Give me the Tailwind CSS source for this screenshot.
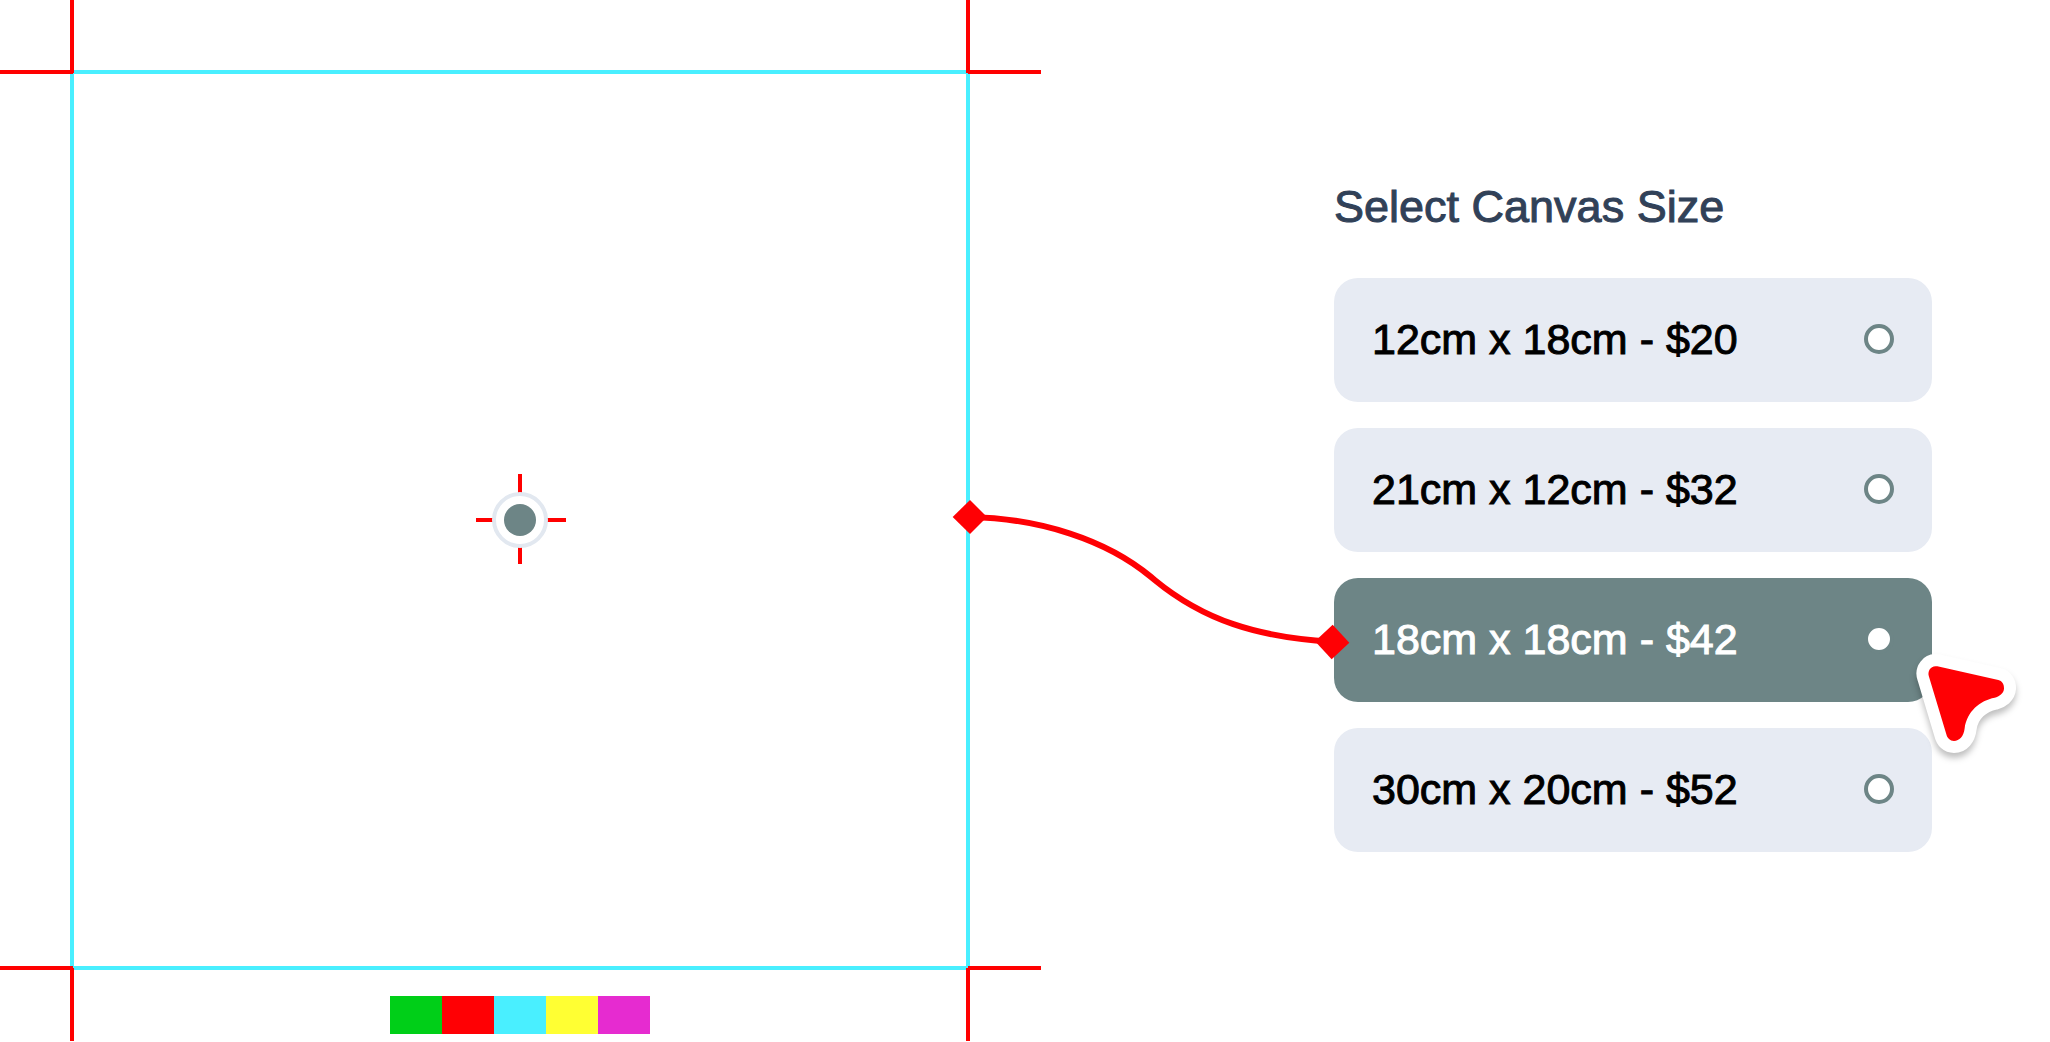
<!DOCTYPE html>
<html lang="en">
<head>
<meta charset="utf-8">
<meta name="viewport" content="width=device-width, initial-scale=1">
<title>Select Canvas Size</title>
<script src="https://cdn.jsdelivr.net/npm/@tailwindcss/browser@4"></script>
</head>
<body class="bg-white font-['Liberation_Sans',Arial,sans-serif] overflow-x-hidden">
<main class="grid grid-cols-[minmax(0,1042fr)_minmax(0,1008fr)] items-center">

  <!-- Print artboard: trim box, crop marks, registration target, colour bar -->
  <svg class="block w-full" viewBox="0 0 1042 1042" role="img" aria-label="Canvas preview with crop marks">
    <rect x="72" y="72" width="896" height="896" fill="none" stroke="#49efff" stroke-width="4"/>
    <g fill="#ff0000" shape-rendering="crispEdges">
      <rect x="70" y="0" width="4" height="73"/>
      <rect x="0" y="70" width="73" height="4"/>
      <rect x="966" y="0" width="4" height="73"/>
      <rect x="968" y="70" width="73" height="4"/>
      <rect x="0" y="966" width="73" height="4"/>
      <rect x="70" y="968" width="4" height="73"/>
      <rect x="968" y="966" width="73" height="4"/>
      <rect x="966" y="968" width="4" height="73"/>
      <rect x="518" y="474" width="4" height="90"/>
      <rect x="476" y="518" width="90" height="4"/>
    </g>
    <circle cx="520" cy="520" r="26" fill="#fff" stroke="#e2e8f0" stroke-width="4"/>
    <circle cx="520" cy="520" r="16" fill="#6d8586"/>
    <g shape-rendering="crispEdges">
      <rect x="390" y="996" width="52" height="38" fill="#00cf18"/>
      <rect x="442" y="996" width="52" height="38" fill="#ff0004"/>
      <rect x="494" y="996" width="52" height="38" fill="#49efff"/>
      <rect x="546" y="996" width="52" height="38" fill="#ffff33"/>
      <rect x="598" y="996" width="52" height="38" fill="#e62bd0"/>
    </g>
  </svg>

  <form class="flex justify-end pb-0.5 pr-[118px]">
    <fieldset class="w-[598px]">
      <legend class="mb-[52px] text-[45px] leading-[38px] text-slate-700 [-webkit-text-stroke:1px]">Select Canvas Size</legend>
      <div class="flex flex-col gap-[26px]">
        <label class="flex h-[124px] items-center justify-between rounded-3xl bg-[#e7ebf3] px-[38px] pb-0.5 text-[43px] text-black [-webkit-text-stroke:1px]">
          12cm x 18cm - $20
          <input type="radio" name="size" class="size-[30px] appearance-none rounded-full border-4 border-[#6d8586] bg-white">
        </label>
        <label class="flex h-[124px] items-center justify-between rounded-3xl bg-[#e7ebf3] px-[38px] pb-0.5 text-[43px] text-black [-webkit-text-stroke:1px]">
          21cm x 12cm - $32
          <input type="radio" name="size" class="size-[30px] appearance-none rounded-full border-4 border-[#6d8586] bg-white">
        </label>
        <label class="relative z-10 flex h-[124px] items-center justify-between rounded-3xl bg-[#6d8586] px-[38px] pb-0.5 text-[43px] text-white [-webkit-text-stroke:1px]">
          18cm x 18cm - $42
          <input type="radio" name="size" checked class="size-[30px] appearance-none rounded-full border-4 border-[#6d8586] bg-white">
          <!-- Connector from the artboard edge to the chosen size -->
          <svg class="pointer-events-none absolute -left-96 -top-[81px] h-[163px] w-[401px]" viewBox="90 51 1203 489" fill="#ff0004" aria-hidden="true">
            <path d="M150 111C360 115 560 180 692 290L704 300C850 420 1010 472 1236 485" fill="none" stroke="#ff0004" stroke-width="18"/>
            <path d="M150 60L201 111L150 162L98 111Z"/>
            <path d="M1238 434L1288 488L1235 538L1185 484Z"/>
          </svg>
          <!-- Pointer -->
          <svg class="pointer-events-none absolute -right-[95px] top-[69px] h-[120px] w-[117px] overflow-visible drop-shadow-[0_5px_3px_rgba(0,0,0,0.25)]" viewBox="270 261 351 360" aria-hidden="true">
            <path d="M352 319L535 360C546 362 553 373 552 386C551 400 538 409 524 413C480 421 440 455 434 505C431 530 418 543 402 543C390 543 382 535 379 523L327 350C321 333 333 315 352 319Z" fill="#fff" stroke="#fff" stroke-width="72" stroke-linejoin="round"/>
            <path d="M352 319L535 360C546 362 553 373 552 386C551 400 538 409 524 413C480 421 440 455 434 505C431 530 418 543 402 543C390 543 382 535 379 523L327 350C321 333 333 315 352 319Z" fill="#ff0004"/>
          </svg>
        </label>
        <label class="flex h-[124px] items-center justify-between rounded-3xl bg-[#e7ebf3] px-[38px] pb-0.5 text-[43px] text-black [-webkit-text-stroke:1px]">
          30cm x 20cm - $52
          <input type="radio" name="size" class="size-[30px] appearance-none rounded-full border-4 border-[#6d8586] bg-white">
        </label>
      </div>
    </fieldset>
  </form>
</main>
</body>
</html>
